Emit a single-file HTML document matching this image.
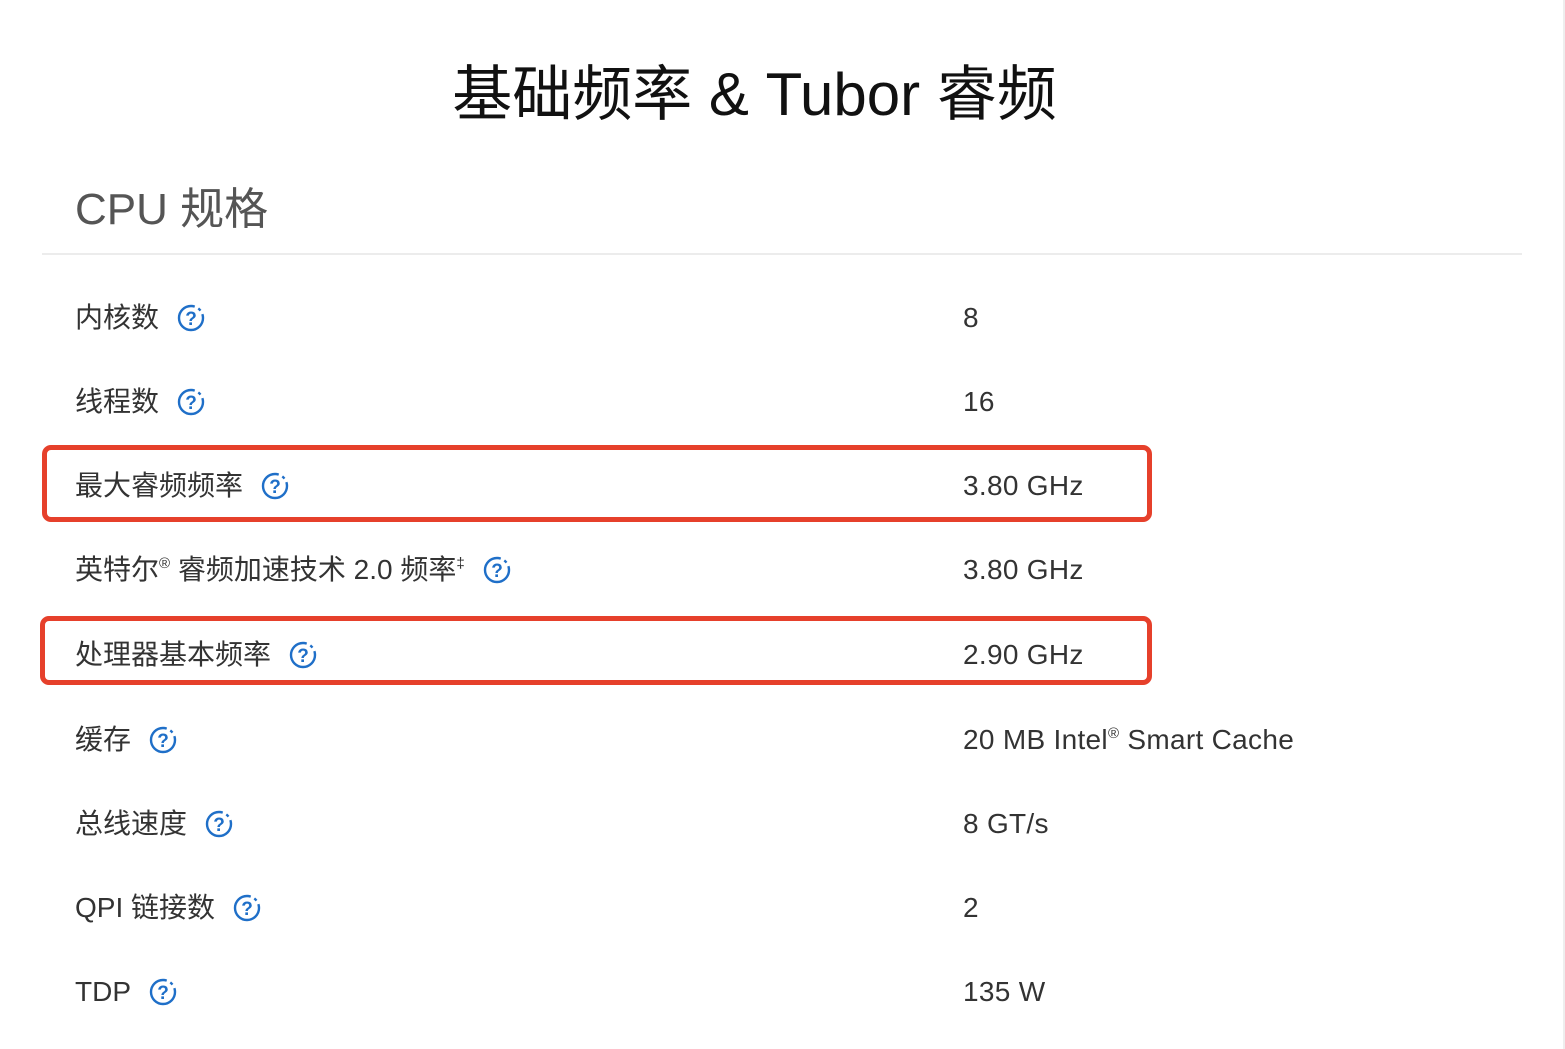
<!DOCTYPE html>
<html><head><meta charset="utf-8"><style>
body{margin:0;width:1565px;height:1049px;background:#fff;position:relative;overflow:hidden;font-family:"Liberation Sans","Noto Sans CJK SC",sans-serif;color:#333}
.t{position:absolute;left:0;width:1509px;top:60px;text-align:center;font-size:60px;color:#111;line-height:70px}
.h{position:absolute;left:75px;top:182px;font-size:44px;color:#555;line-height:56px}
.ln{position:absolute;left:42px;width:1480px;top:253px;height:2px;background:#ececec}
.vr{position:absolute;left:1563px;top:0;width:2px;height:1049px;background:#eee}
.r{position:absolute;left:75px;font-size:28px;line-height:36px;white-space:nowrap}
.v{position:absolute;left:963px;font-size:28px;line-height:36px;white-space:nowrap;letter-spacing:0.3px}
.q{display:inline-block;vertical-align:middle;margin-left:18px;margin-top:-4px}
.b{position:absolute;border:5px solid #e6402b;border-radius:9px;box-sizing:border-box}
sup{font-size:15px;line-height:0;vertical-align:0;position:relative;top:-11px}
</style></head><body>
<div class="t">基础频率 &amp; Tubor 睿频</div>
<div class="h">CPU 规格</div>
<div class="ln"></div><div class="vr"></div>
<div class="b" style="left:42px;top:445px;width:1110px;height:77px"></div>
<div class="b" style="left:40px;top:616px;width:1112px;height:69px"></div>
<div class="r" style="top:300px">内核数<svg class="q" width="28" height="28" viewBox="0 0 28 28"><circle cx="14" cy="14" r="12" fill="none" stroke="#1f6fc8" stroke-width="2.4" stroke-dasharray="60 4 3 4"/><text x="14" y="21" text-anchor="middle" font-size="19" font-weight="bold" fill="#1f6fc8" font-family="Liberation Sans">?</text></svg></div>
<div class="v" style="top:300px">8</div>
<div class="r" style="top:384px">线程数<svg class="q" width="28" height="28" viewBox="0 0 28 28"><circle cx="14" cy="14" r="12" fill="none" stroke="#1f6fc8" stroke-width="2.4" stroke-dasharray="60 4 3 4"/><text x="14" y="21" text-anchor="middle" font-size="19" font-weight="bold" fill="#1f6fc8" font-family="Liberation Sans">?</text></svg></div>
<div class="v" style="top:384px">16</div>
<div class="r" style="top:468px">最大睿频频率<svg class="q" width="28" height="28" viewBox="0 0 28 28"><circle cx="14" cy="14" r="12" fill="none" stroke="#1f6fc8" stroke-width="2.4" stroke-dasharray="60 4 3 4"/><text x="14" y="21" text-anchor="middle" font-size="19" font-weight="bold" fill="#1f6fc8" font-family="Liberation Sans">?</text></svg></div>
<div class="v" style="top:468px">3.80 GHz</div>
<div class="r" style="top:552px">英特尔<sup>®</sup> 睿频加速技术 2.0 频率<sup>‡</sup><svg class="q" width="28" height="28" viewBox="0 0 28 28"><circle cx="14" cy="14" r="12" fill="none" stroke="#1f6fc8" stroke-width="2.4" stroke-dasharray="60 4 3 4"/><text x="14" y="21" text-anchor="middle" font-size="19" font-weight="bold" fill="#1f6fc8" font-family="Liberation Sans">?</text></svg></div>
<div class="v" style="top:552px">3.80 GHz</div>
<div class="r" style="top:637px">处理器基本频率<svg class="q" width="28" height="28" viewBox="0 0 28 28"><circle cx="14" cy="14" r="12" fill="none" stroke="#1f6fc8" stroke-width="2.4" stroke-dasharray="60 4 3 4"/><text x="14" y="21" text-anchor="middle" font-size="19" font-weight="bold" fill="#1f6fc8" font-family="Liberation Sans">?</text></svg></div>
<div class="v" style="top:637px">2.90 GHz</div>
<div class="r" style="top:722px">缓存<svg class="q" width="28" height="28" viewBox="0 0 28 28"><circle cx="14" cy="14" r="12" fill="none" stroke="#1f6fc8" stroke-width="2.4" stroke-dasharray="60 4 3 4"/><text x="14" y="21" text-anchor="middle" font-size="19" font-weight="bold" fill="#1f6fc8" font-family="Liberation Sans">?</text></svg></div>
<div class="v" style="top:722px">20 MB Intel<sup>®</sup> Smart Cache</div>
<div class="r" style="top:806px">总线速度<svg class="q" width="28" height="28" viewBox="0 0 28 28"><circle cx="14" cy="14" r="12" fill="none" stroke="#1f6fc8" stroke-width="2.4" stroke-dasharray="60 4 3 4"/><text x="14" y="21" text-anchor="middle" font-size="19" font-weight="bold" fill="#1f6fc8" font-family="Liberation Sans">?</text></svg></div>
<div class="v" style="top:806px">8 GT/s</div>
<div class="r" style="top:890px">QPI 链接数<svg class="q" width="28" height="28" viewBox="0 0 28 28"><circle cx="14" cy="14" r="12" fill="none" stroke="#1f6fc8" stroke-width="2.4" stroke-dasharray="60 4 3 4"/><text x="14" y="21" text-anchor="middle" font-size="19" font-weight="bold" fill="#1f6fc8" font-family="Liberation Sans">?</text></svg></div>
<div class="v" style="top:890px">2</div>
<div class="r" style="top:974px">TDP<svg class="q" width="28" height="28" viewBox="0 0 28 28"><circle cx="14" cy="14" r="12" fill="none" stroke="#1f6fc8" stroke-width="2.4" stroke-dasharray="60 4 3 4"/><text x="14" y="21" text-anchor="middle" font-size="19" font-weight="bold" fill="#1f6fc8" font-family="Liberation Sans">?</text></svg></div>
<div class="v" style="top:974px">135 W</div>
</body></html>
